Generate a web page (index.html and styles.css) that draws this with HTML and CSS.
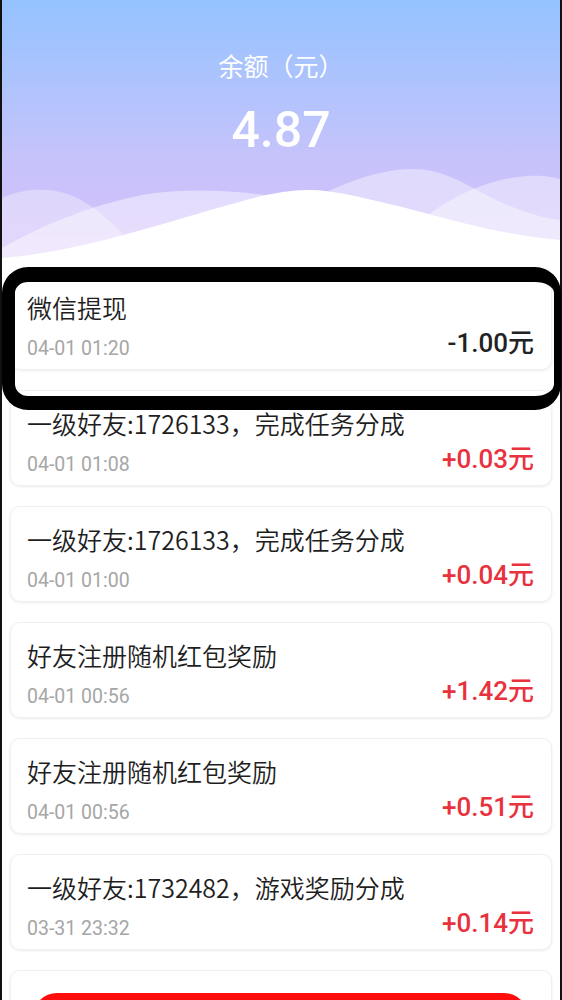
FILE: index.html
```html
<!DOCTYPE html>
<html>
<head>
    <meta charset="utf-8">
    <title>余额明细</title>
    <link rel="stylesheet" href="styles.css">
</head>
<body>
    <div class="page">
        <div class="header">
            <div class="balance-label">余额（元）</div>
            <div class="balance">4.87</div>
            <svg class="waves" viewBox="0 0 558 102" preserveAspectRatio="none">
                <path d="M0,38 C15,31 30,29 45,30 C75,32 100,50 130,85 L130,102 L0,102 Z" fill="#fff" fill-opacity="0.35"/>
                <path d="M320,34 C350,20 380,9 410,9 C440,9 460,22 490,38 C515,50 540,58 558,60 L558,102 L320,102 Z" fill="#fff" fill-opacity="0.4"/>
                <path d="M420,60 C450,35 490,18 525,16 C540,15 550,17 558,19 L558,102 L420,102 Z" fill="#fff" fill-opacity="0.4"/>
                <path d="M0,88 C40,65 90,45 140,35 C180,28 230,30 270,36 L330,60 L330,102 L0,102 Z" fill="#fff" fill-opacity="0.45"/>
                <path d="M0,98 C80,92 170,60 230,44 C260,35 285,30 305,30 C335,30 360,38 400,47 C450,60 500,75 558,80 L558,102 L0,102 Z" fill="#fff"/>
            </svg>
        </div>

        <div class="list">
            <div class="item">
                <div class="item-title">微信提现</div>
                <div class="item-row">
                    <span class="item-time">04-01 01:20</span>
                    <span class="item-amount">-1.00元</span>
                </div>
            </div>
            <div class="item">
                <div class="item-title">一级好友:1726133，完成任务分成</div>
                <div class="item-row">
                    <span class="item-time">04-01 01:08</span>
                    <span class="item-amount plus">+0.03元</span>
                </div>
            </div>
            <div class="item">
                <div class="item-title">一级好友:1726133，完成任务分成</div>
                <div class="item-row">
                    <span class="item-time">04-01 01:00</span>
                    <span class="item-amount plus">+0.04元</span>
                </div>
            </div>
            <div class="item">
                <div class="item-title">好友注册随机红包奖励</div>
                <div class="item-row">
                    <span class="item-time">04-01 00:56</span>
                    <span class="item-amount plus">+1.42元</span>
                </div>
            </div>
            <div class="item">
                <div class="item-title">好友注册随机红包奖励</div>
                <div class="item-row">
                    <span class="item-time">04-01 00:56</span>
                    <span class="item-amount plus">+0.51元</span>
                </div>
            </div>
            <div class="item">
                <div class="item-title">一级好友:1732482，游戏奖励分成</div>
                <div class="item-row">
                    <span class="item-time">03-31 23:32</span>
                    <span class="item-amount plus">+0.14元</span>
                </div>
            </div>
            <div class="item"></div>
        </div>
    </div>

    <div class="highlight"></div>
    <div class="withdraw-btn"></div>
</body>
</html>
```

FILE: styles.css
```css
body {
    margin: 0;
    font-family: Roboto, "Noto Sans CJK SC", sans-serif;
    background: #fff;
}
.page {
    border-left: 2px solid #111;
    border-right: 2px solid #111;
    min-height: 1000px;
}
.header {
    background: linear-gradient(#94c3ff, #c6c3fb 60%, #d8c0fb);
    padding-top: 50px;
    text-align: center;
    color: #fff;
}
.balance-label {
    font-size: 25px;
    line-height: 30px;
    font-family: "Noto Sans CJK SC", sans-serif;
    font-weight: 400;
}
.balance {
    margin-top: 20px;
    font-size: 50px;
    line-height: 60px;
    font-weight: 500;
}
.waves {
    display: block;
    width: 100%;
    height: 102px;
}
.list {
    padding: 12px 8px 0 8px;
}
.item {
    height: 96px;
    margin-bottom: 20px;
    padding: 16px 17px 0 16px;
    box-sizing: border-box;
    background: #fff;
    border-radius: 10px;
    border: 1px solid #f0f0f0;
    box-shadow: 0 1px 3px rgba(0, 0, 0, 0.08);
}
.item-title {
    font-size: 25px;
    line-height: 32px;
    color: #1e1e1e;
    font-family: "Noto Sans CJK SC", sans-serif;
    font-weight: 350;
}
.item-row {
    display: flex;
    justify-content: space-between;
    align-items: center;
}
.item-time {
    margin-top: 12px;
    font-size: 19.5px;
    line-height: 28px;
    color: #a6a6a6;
}
.item-amount {
    font-size: 26px;
    line-height: 30px;
    color: #222;
    font-weight: 500;
}
.item-amount.plus {
    color: #e8323e;
}
.highlight {
    position: absolute;
    top: 267px;
    left: 2px;
    width: 559px;
    height: 143px;
    box-sizing: border-box;
    border-style: solid;
    border-color: #000;
    border-width: 15px 7px 14px 13px;
    border-radius: 26px;
}
.withdraw-btn {
    position: fixed;
    left: 33px;
    bottom: -53px;
    width: 495px;
    height: 60px;
    background: #ff0d0d;
    border-radius: 24px;
}
```
